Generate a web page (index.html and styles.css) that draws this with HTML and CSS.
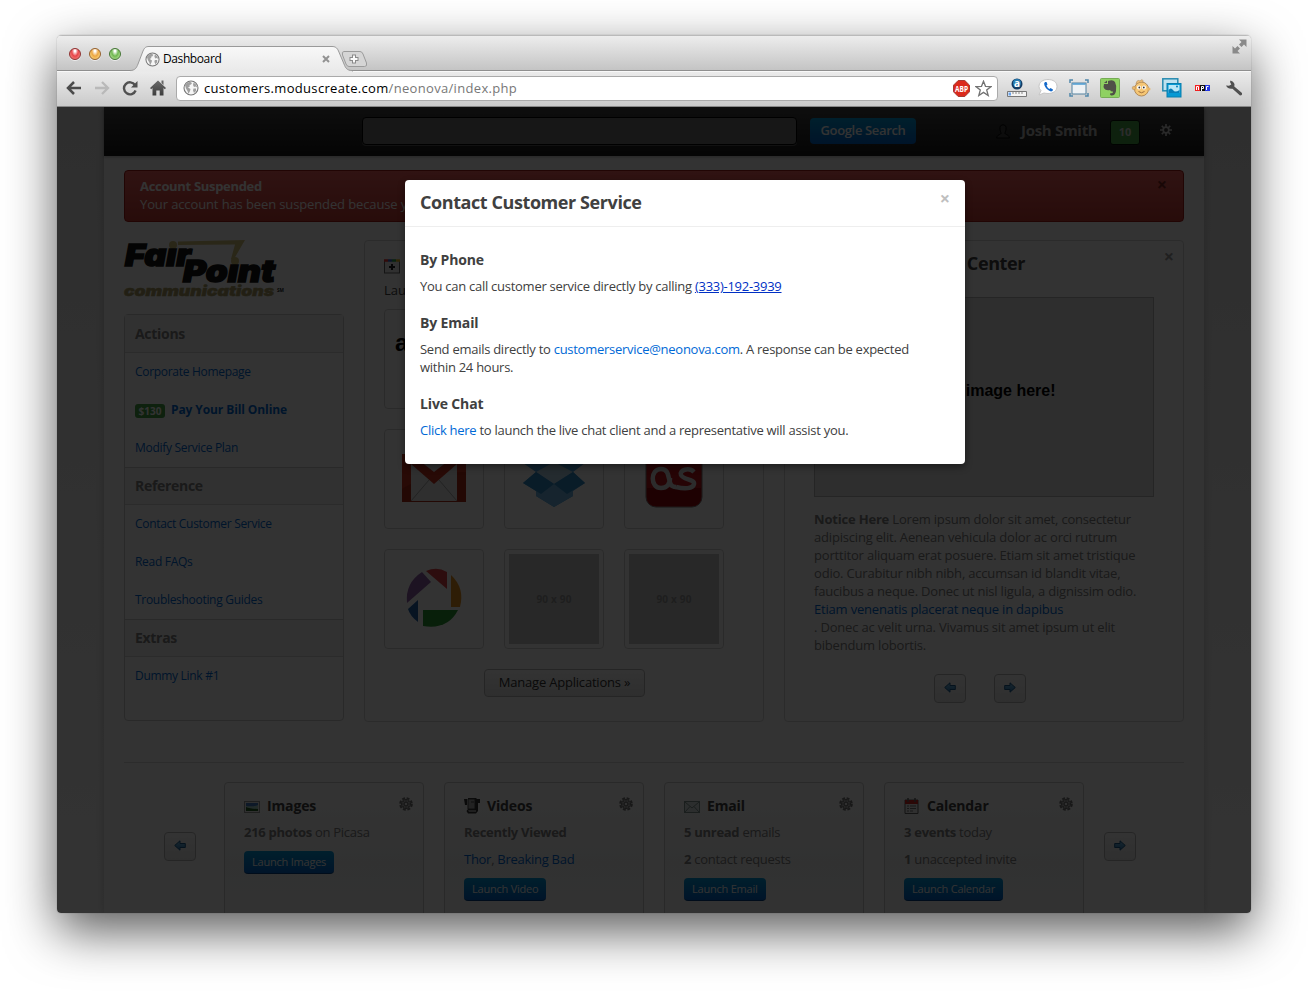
FILE: index.html
```
<!DOCTYPE html>
<html lang="en">
<head>
<meta charset="utf-8">
<title>Dashboard</title>
<link rel="stylesheet" href="styles.css">
</head>
<body>
<svg class="defs" width="0" height="0">
  <defs>
    <linearGradient id="arrowFill" x1="0" y1="0" x2="0" y2="1"><stop offset="0" stop-color="#7cc4ee"/><stop offset="1" stop-color="#2a7ab8"/></linearGradient>
    <linearGradient id="tabFill" x1="0" y1="0" x2="0" y2="1"><stop offset="0" stop-color="#f8f8f8"/><stop offset="1" stop-color="#e9e9e9"/></linearGradient>
    <linearGradient id="dark" x1="0" y1="0" x2="0" y2="1"><stop offset="0" stop-color="#6a6a6a"/><stop offset="1" stop-color="#3c3c3c"/></linearGradient>
  </defs>
  <symbol id="globe" viewBox="0 0 16 16"><circle cx="8" cy="8" r="7" fill="#f6f6f6" stroke="#777" stroke-width="1.1"/><path d="M2 5Q4 2 7 1.8L9 3 8 4.5 6.5 5 6.8 6.5 5 7.5 7.5 9 7 11 5.5 14 4.5 11 3 8.5zM10.5 2.5L13 4.5 14.3 7.5 12.5 6.5 11 7 10 5zM10.5 8.5L13 8.5 13 11 11 13 10 10.5z" fill="#a0a0a0"/></symbol>
  <symbol id="arrow" viewBox="0 0 12 11"><path d="M.7 5.5L6 .8V3.5H11.3V7.5H6V10.2Z" fill="url(#arrowFill)" stroke="#1c5c8e"/></symbol>
  <symbol id="gear" viewBox="0 0 14 14"><circle cx="7" cy="7" r="5.8" fill="none" stroke="#777" stroke-width="2" stroke-dasharray="2.9 1.65"/><circle cx="7" cy="7" r="4.6" fill="#bbb" stroke="#777"/><path d="M7 2.5V11.5M2.5 7H11.5M4 4L10 10M10 4L4 10" stroke="#777" stroke-width=".8"/><circle cx="7" cy="7" r="1.8" fill="#eee" stroke="#777"/></symbol>
</svg>

<main class="window">
  <header class="titlebar">
    <div class="lights"><i class="light red"></i><i class="light amber"></i><i class="light green"></i></div>
    <div class="tab">
      <svg class="tab-shape" width="230" height="26" viewBox="0 0 230 26"><path d="M0 24.5C5 24.5 6.500 22 8 18L13 5C14.500 1.500 16 .5 19 .5H202C205 .5 207 1.500 208.500 5L214 18C215.500 22 217 24.500 222 24.500V26H0Z" fill="url(#tabFill)" stroke="#999"/><path d="M0 25.500H222" stroke="#eaeaea"/></svg>
      <svg class="tab-icon" width="15" height="15"><use href="#globe"/></svg>
      <span class="tab-title">Dashboard</span>
      <svg class="tab-close" width="8" height="8" viewBox="0 0 8 8"><path d="M1 1L7 7M7 1L1 7" stroke="#929292" stroke-width="2"/></svg>
    </div>
    <svg class="new-tab" width="28" height="18" viewBox="0 0 28 18"><path d="M3 1.500H19Q21 1.500 22 4L25.500 13Q26.500 16.500 23.500 16.500H8Q6 16.500 5 14L1.500 5Q.5 1.500 3 1.500Z" fill="#d5d5d5" stroke="#9b9b9b"/><path d="M13 4.500V13.500M8.500 9H17.500" stroke="#8a8a8a" stroke-width="4"/><path d="M13 5.500V12.500M9.500 9H16.500" stroke="#fafafa" stroke-width="2"/></svg>
    <svg class="fullscreen" width="15" height="15" viewBox="0 0 15 15"><path d="M7 .5H14.500V8L12 5.500 9.500 8 7 5.500 9.500 3ZM.5 7L3 9.500 5.500 7 8 9.500 5.500 12 8 14.500H.5Z" fill="#8a8a8a"/></svg>
  </header>

  <nav class="toolbar">
    <svg width="16" height="16" viewBox="0 0 16 16"><path d="M8 2L2 8 8 14M2 8H15" fill="none" stroke="#4b4b4b" stroke-width="2.500"/></svg>
    <svg width="16" height="16" viewBox="0 0 16 16"><path d="M8 2L14 8 8 14M14 8H1" fill="none" stroke="#b9b9b9" stroke-width="2.300"/></svg>
    <svg width="16" height="16" viewBox="0 0 16 16"><path d="M13 5A6 6 0 1 0 13.600 10.500" fill="none" stroke="#505050" stroke-width="2.400"/><path d="M15.500 1V7.500H9Z" fill="#505050"/></svg>
    <svg width="16" height="16" viewBox="0 0 16 16"><path d="M8 .5L16 8 14.800 9.300 13.500 8.100V15.500H9.700V10.500H6.300V15.500H2.500V8.100L1.200 9.300 0 8 8 .5ZM11.500 .5H13.500V5L11.500 3Z" fill="url(#dark)"/></svg>
    <div class="omnibox">
      <svg width="16" height="16"><use href="#globe"/></svg>
      <span class="url">customers.moduscreate.com<span class="path">/neonova/index.php</span></span>
      <svg class="abp" width="17" height="17" viewBox="0 0 17 17"><path d="M5.200.5H11.800L16.500 5.200V11.800L11.800 16.500H5.200L.5 11.800V5.200Z" fill="#db2a1c" stroke="#a53a32"/><text x="8.500" y="11.500" textLength="13" lengthAdjust="spacingAndGlyphs" class="abp-text">ABP</text></svg>
      <svg width="17" height="17" viewBox="0 0 17 17"><path d="M8.500 1.200L10.500 6.300 16 6.600 11.700 10 13.200 15.500 8.500 12.400 3.800 15.500 5.300 10 1 6.600 6.500 6.300Z" fill="#fff" stroke="#737373" stroke-width="1.300"/></svg>
    </div>
    <svg width="20" height="20" viewBox="0 0 20 20"><circle cx="10" cy="6" r="5.500" fill="#123c64"/><circle cx="10" cy="5" r="4" fill="#277bb0"/><text x="10" y="9" class="ext-a">a</text><path d="M.5 13.500H19.500V18.500H.5Z" fill="#f4f4f4" stroke="#777"/><path d="M1.500 14.500H4V17.500H1.500Z" fill="#6aa5ef"/><path d="M6 14V16M9 14V16M12 14V16M15 14V16" stroke="#888"/></svg>
    <svg width="20" height="20" viewBox="0 0 20 20"><path d="M10 1.500C15 1.500 19 4 19 8.500S15 15.500 10 15.500Q8 15.500 6 15L1 17 3 12.500Q1 11 1 8.500C1 4 5 1.500 10 1.500Z" fill="#fff" stroke="#c6c6c6"/><path d="M7 4Q5.500 5 6.500 7.500 8.500 12 13 13.500 15 13.500 15 11.500L12.500 10 11.500 11Q9.500 10 8.500 7.500L9.500 6.500 8.500 4Z" fill="#1469ca"/></svg>
    <svg width="20" height="20" viewBox="0 0 20 20"><rect x="3" y="5" width="14" height="11" fill="#edf1f4" stroke="#53809e"/><path d="M3.500 6H16.500" stroke="#4a9bd2" stroke-width="1.500"/><path d="M1 5V2H4M16 2H19V5M19 15V18H16M4 18H1V15" fill="none" stroke="#4f87aa" stroke-width="1.500"/></svg>
    <svg width="20" height="20" viewBox="0 0 20 20"><rect x=".5" y=".5" width="19" height="19" rx="1" fill="#8fd162" stroke="#76ac55"/><path d="M8 3Q13 1 15 4 17 8 16 13 15 18 11 17.500 9 16 11 15 13 16 13 13.500 11 14 10 12 5 13 3.500 9L4 6H8Z" fill="#505048"/><path d="M4 5L7 2.500V5Z" fill="#505048"/></svg>
    <svg width="20" height="20" viewBox="0 0 20 20"><circle cx="10.500" cy="11" r="7" fill="#f5c674" stroke="#b18a58"/><circle cx="3" cy="10" r="1.800" fill="#e9b568" stroke="#b18a58" stroke-width=".5"/><circle cx="18" cy="11" r="1.500" fill="#e9b568"/><path d="M5 6Q6 1 9 3 12 0 12 4 8 4 5 6" fill="#efc078" stroke="#b18a58" stroke-width=".6"/><circle cx="8" cy="9.500" r="2" fill="#fff"/><circle cx="13" cy="9.500" r="2" fill="#fff"/><circle cx="8.300" cy="9.500" r=".9" fill="#333"/><circle cx="12.800" cy="9.500" r=".9" fill="#333"/><path d="M7.500 13.500Q10.500 16 13.500 13.500" fill="none" stroke="#9f6f3d"/></svg>
    <svg width="20" height="20" viewBox="0 0 20 20"><rect x=".8" y=".8" width="15" height="12" fill="#bfe2ef" stroke="#278ab0" stroke-width="1.500"/><rect x="5" y="5.500" width="14" height="13.500" fill="#0699d4" stroke="#087ead"/><path d="M6.500 7H17.500V15H6.500Z" fill="#b9e7f6"/><path d="M6.500 12Q9 9 11 12T17.500 12V15H6.500Z" fill="#087eb7"/><circle cx="15" cy="8.500" r="1" fill="#087eb7"/></svg>
    <svg width="20" height="20" viewBox="0 0 20 20"><path d="M2 7H7V13H2Z" fill="#e22"/><path d="M7 7H12V13H7Z" fill="#111"/><path d="M12 7H17V13H12Z" fill="#2438e4"/><path d="M3.500 12V8.500H5.500V12M8.500 13V8.500H10.500V10.500H8.500M13.500 12V8.500H15.500" fill="none" stroke="#fff"/></svg>
    <svg width="20" height="20" viewBox="0 0 20 20"><path d="M6.500 2.500Q9.500 3 10.500 6L10.300 8.500 18 15Q18.500 17.500 16 17.500L8.500 10.700Q4 11.500 2 7.500L5 7.800 7.300 6.500 6 4Z" fill="#505050"/></svg>
  </nav>

  <section class="viewport">
    <div class="page">
      <div class="topbar">
        <div class="search"></div>
        <div class="search-btn">Google Search</div>
        <div class="user">
          <svg width="14" height="15" viewBox="0 0 14 15"><path d="M7 .8C9.500.8 10.500 3 10 5.500 9.800 7.500 9 8 9 9.500 10 11 13 10.500 13.300 14H.7C1 10.500 4 11 5 9.500 5 8 4.200 7.500 4 5.500 3.500 3 4.500.8 7 .8Z" fill="#3c3c3c" stroke="#000"/></svg>
          <strong class="name">Josh Smith</strong><span class="count">10</span>
          <svg class="sun" width="12" height="12" viewBox="0 0 12 12"><circle cx="6" cy="6" r="2.800" fill="none" stroke="#ccc" stroke-width="1.700"/><path d="M6 0V3M6 9V12M0 6H3M9 6H12M1.800 1.800L4 4M8 8L10.200 10.200M10.200 1.800L8 4M4 8L1.800 10.200" stroke="#ccc" stroke-width="1.700"/></svg>
        </div>
      </div>
      <div class="content">
        <div class="alert"><div><b>Account Suspended</b><p>Your account has been suspended because your</p></div><span class="x">×</span></div>
        <div class="columns">
          <aside class="side">
            <svg class="logo" width="162" height="62" viewBox="0 0 162 62">
              <path d="M54 1.500L121 0 110 19H107L111 4.500 54 5Z" fill="#d3c17b"/><circle cx="49" cy="5" r="4" fill="#d3c17b"/><circle cx="111" cy="21" r="4" fill="#d3c17b"/>
              <text x="1" y="26" textLength="66" lengthAdjust="spacingAndGlyphs" class="logo-main">Fa&#305;r</text>
              <text x="59" y="42" textLength="92" lengthAdjust="spacingAndGlyphs" class="logo-main">Po&#305;nt</text>
              <text x="0" y="55.500" textLength="150" lengthAdjust="spacingAndGlyphs" class="logo-sub">communications</text>
              <text x="153" y="52" textLength="7" lengthAdjust="spacingAndGlyphs" class="logo-sm">SM</text>
            </svg>
            <div class="menu">
              <h3>Actions</h3><a>Corporate Homepage</a><a class="pay"><span class="due">$130</span><b>Pay Your Bill Online</b></a><a>Modify Service Plan</a>
              <h3>Reference</h3><a>Contact Customer Service</a><a>Read FAQs</a><a>Troubleshooting Guides</a>
              <h3>Extras</h3><a>Dummy Link #1</a>
            </div>
          </aside>
          <section class="panel apps">
            <svg width="16" height="15" viewBox="0 0 16 15"><rect x=".5" y="1.500" width="15" height="12.500" fill="#eee" stroke="#666"/><path d="M0 1.500H4" stroke="#e33" stroke-width="2.500"/><path d="M4 1.500H8" stroke="#3862c9" stroke-width="2.500"/><path d="M8 1.500H12" stroke="#2da44b" stroke-width="2.500"/><path d="M12 1.500H16" stroke="#e9b928" stroke-width="2.500"/><path d="M8 5V11M5 8H11" stroke="#222" stroke-width="2"/></svg>
            <p class="lead">Launch</p>
            <div class="tiles">
              <div class="tile amazon"><b>a</b></div><div class="tile"></div><div class="tile"></div>
              <div class="tile"><svg width="90" height="90" viewBox="0 0 90 90"><path d="M13 20H77V68H13Z" fill="#c7321e"/><path d="M13 55Q40 38 77 38V68H13Z" fill="#ad2818"/><path d="M22 24H68V67H22Z" fill="#e8e8e8"/><path d="M22 24H68V30L45 50 22 30Z" fill="#c7321e"/><path d="M22 20L45 38 68 20" fill="#eee"/><path d="M22 67L40 46M68 67L50 46" stroke="#aaa"/></svg></div>
              <div class="tile"><svg width="90" height="90" viewBox="0 0 90 90"><path d="M14 29L29 19 45 29 61 19 76 29 64 38 76 49 64 57V62L45 73 27 62V57L14 49 27 38Z" fill="#4aa3de"/><path d="M27 38L45 28 64 38 45 50Z" fill="#b5d5e8"/><path d="M27 56L45 50V73L27 62ZM64 56L45 50V73L64 62Z" fill="#6db6e4"/><path d="M45 50L32 60 14 49 27 38Z" fill="#318ac6"/><path d="M45 50L58 60 76 49 64 38Z" fill="#318ac6"/></svg></div>
              <div class="tile"><svg width="90" height="90" viewBox="0 0 90 90"><rect x="17" y="17" width="56" height="56" rx="10" fill="#bd171c" stroke="#777"/><path d="M18 54H72V63Q72 72 62 72H28Q18 72 18 63Z" fill="#95080d"/><path d="M47 53C36 53 44 35 32 35 21 35 21 54 32 54 38 54 41 50 41 44" fill="none" stroke="#ddd" stroke-width="4.500"/><path d="M65 38C60 33 50 36 52 41S66 45 65 50 55 55 47 53" fill="none" stroke="#ddd" stroke-width="4.500"/></svg></div>
              <div class="tile"><svg width="90" height="90" viewBox="0 0 90 90"><path d="M37 17Q48 12 58 18V35Z" fill="#e14347"/><path d="M62 21Q76 34 71 53H62Z" fill="#e79322"/><path d="M34 56H69Q59 76 34 72Z" fill="#2c9a35"/><path d="M19 55L29 46V68Q21 62 19 55Z" fill="#2465ac"/><path d="M18 49Q16 29 33 18L42 28Z" fill="#9361a9"/></svg></div>
              <div class="tile blank"><span>90 x 90</span></div><div class="tile blank"><span>90 x 90</span></div>
            </div>
            <div class="manage">Manage Applications »</div>
          </section>
          <section class="panel notice">
            <div class="notice-head"><h2>Message Center</h2><span class="x">×</span></div>
            <div class="picture">Put an image here!</div>
            <p><b>Notice Here</b> Lorem ipsum dolor sit amet, consectetur<br>adipiscing elit. Aenean vehicula dolor ac orci rutrum<br>porttitor aliquam erat posuere. Etiam sit amet tristique<br>odio. Curabitur nibh nibh, accumsan id blandit vitae,<br>faucibus a neque. Donec ut nisl ligula, a dignissim odio.<br><a>Etiam venenatis placerat neque in dapibus</a><br>. Donec ac velit urna. Vivamus sit amet ipsum ut elit<br>bibendum lobortis.</p>
            <div class="pager"><span class="arrow-btn"><svg width="12" height="11"><use href="#arrow"/></svg></span><span class="arrow-btn next"><svg width="12" height="11"><use href="#arrow"/></svg></span></div>
          </section>
        </div>
        <div class="cards">
          <span class="arrow-btn"><svg width="12" height="11"><use href="#arrow"/></svg></span>
          <article class="card"><div class="card-head"><svg width="16" height="16" viewBox="0 0 16 16"><rect x=".5" y="3.500" width="15" height="11" fill="#eee" stroke="#999"/><path d="M2 5H14V13H2Z" fill="#477fc5"/><path d="M2 8Q9 9 14 7V13H2Z" fill="#a8d5ce"/><path d="M2 9Q6 11 14 11V13H2Z" fill="#245f27"/></svg><h4>Images</h4><svg class="gear" width="14" height="14"><use href="#gear"/></svg></div><p><b>216 photos</b> on Picasa</p><span class="launch">Launch Images</span></article>
          <article class="card"><div class="card-head"><svg width="16" height="16" viewBox="0 0 16 16"><path d="M0 1H3V7H1ZM4 0H12L13 1H16V5H14V13L12 15.500H4L2.500 13 4 11Z" fill="#333"/><path d="M4 1H11V11H4Z" fill="#aaa" stroke="#444"/><path d="M7 3H10V5H7Z" fill="#777"/><path d="M4 12H12V14H5Z" fill="#999"/></svg><h4>Videos</h4><svg class="gear" width="14" height="14"><use href="#gear"/></svg></div><p><b>Recently Viewed</b></p><p><a>Thor</a>, <a>Breaking Bad</a></p><span class="launch">Launch Video</span></article>
          <article class="card"><div class="card-head"><svg width="16" height="16" viewBox="0 0 16 16"><rect x=".5" y="3.500" width="15" height="11" fill="#dce5e5" stroke="#819691"/><path d="M1 4L8 10 15 4M1 14L6 8.500M15 14L10 8.500" fill="none" stroke="#819691"/></svg><h4>Email</h4><svg class="gear" width="14" height="14"><use href="#gear"/></svg></div><p><b>5 unread</b> emails</p><p><b>2</b> contact requests</p><span class="launch">Launch Email</span></article>
          <article class="card"><div class="card-head"><svg width="16" height="16" viewBox="0 0 16 16"><path d="M1 2H14V15.500H1Z" fill="#eee" stroke="#666"/><path d="M1 2H14V6H1Z" fill="#d52a24"/><path d="M4 0V4M11 0V4" stroke="#666" stroke-width="1.500"/><path d="M3 8H5M6 8H12M3 10.500H5M6 10.500H12M3 13H5M6 13H9" stroke="#777"/></svg><h4>Calendar</h4><svg class="gear" width="14" height="14"><use href="#gear"/></svg></div><p><b>3 events</b> today</p><p><b>1</b> unaccepted invite</p><span class="launch">Launch Calendar</span></article>
          <span class="arrow-btn next"><svg width="12" height="11"><use href="#arrow"/></svg></span>
        </div>
      </div>
    </div>
    <div class="backdrop"></div>
    <div class="modal">
      <div class="modal-head"><h2>Contact Customer Service</h2><span class="x">×</span></div>
      <div class="modal-body">
        <h4>By Phone</h4><p>You can call customer service directly by calling <a class="phone">(333)-192-3939</a></p>
        <h4>By Email</h4><p>Send emails directly to <a>customerservice@neonova.com</a>. A response can be expected<br>within 24 hours.</p>
        <h4>Live Chat</h4><p><a>Click here</a> to launch the live chat client and a representative will assist you.</p>
      </div>
    </div>
  </section>
</main>
</body>
</html>
```
FILE: styles.css
```
* { box-sizing: border-box; }
body { margin: 0; padding: 35px 57px 79px; width: 1308px; height: 992px; overflow: hidden; background: #fff; font: 13px/18px "Open Sans", "Noto Sans", sans-serif; color: #808080; }
h2, h3, h4, p { margin: 0; }
p { white-space: nowrap; }
svg { display: block; flex: none; }
.defs { position: absolute; }
a { color: #0069d6; }
.window { width: 1194px; height: 878px; border-radius: 5px 5px 4px 4px; box-shadow: 0 18px 50px rgba(0,0,0,.65), 0 0 1px rgba(0,0,0,.5); display: flex; flex-direction: column; overflow: hidden; }

.titlebar { height: 36px; display: flex; align-items: flex-start; background: linear-gradient(#ededed, #c4c4c4); border-top: 1px solid #bababa; border-bottom: 1px solid #8f8f8f; flex: none; }
.lights { display: flex; gap: 8px; padding: 12px 0 0 12px; width: 73px; }
.light { width: 12px; height: 12px; border-radius: 50%; border: 1px solid; box-shadow: 0 1px 0 rgba(255,255,255,.6); }
.red { border-color: #8f3130; background: radial-gradient(ellipse at 50% 20%, #fff 0 8%, #e8464a 45%, #f58d85 90%); }
.amber { border-color: #95602c; background: radial-gradient(ellipse at 50% 20%, #fff 0 8%, #eda743 45%, #fde08a 90%); }
.green { border-color: #447534; background: radial-gradient(ellipse at 50% 20%, #fff 0 8%, #70b851 45%, #c1e8a1 90%); }
.tab { position: relative; width: 211px; height: 26px; margin-top: 10px; display: flex; align-items: center; padding-left: 15px; }
.tab-shape { position: absolute; left: 0; top: 0; }
.tab-icon, .tab-close, .tab-title { position: relative; }
.tab-title { margin: 0 0 0 3px; color: #000; font-size: 12px; width: 159px; letter-spacing: -.4px; }
.new-tab { margin: 14px 0 0; }
.fullscreen { margin: 3px 4px 0 auto; }

.toolbar { height: 36px; flex: none; display: flex; align-items: center; padding: 0 8px 2px 9px; gap: 12px; background: linear-gradient(#ebebeb, #cacaca); border-top: 1px solid #f8f8f8; border-bottom: 1px solid #888; }
.omnibox { width: 823px; height: 25px; margin: 0 -3px 0 -2px; padding: 0 5px 0 6px; display: flex; align-items: center; background: #fff; border: 1px solid #aaa; border-radius: 4px; }
.toolbar > svg:nth-child(n+6) { margin-right: -1px; }
.url { flex: 1; margin-left: 5px; color: #000; letter-spacing: .32px; }
.path { color: #777; }
.abp { margin-right: 5px; }
.abp-text { font: bold 8px "Open Sans", sans-serif; fill: #fff; text-anchor: middle; }
.ext-a { font: bold 10px/10px "Open Sans", sans-serif; fill: #fff; text-anchor: middle; }

.viewport { flex: 1; min-height: 0; position: relative; overflow: hidden; background: linear-gradient(#e6e6e6, #fff); padding: 0 47px; }
.page { width: 1100px; height: 806px; background: #fff; box-shadow: 0 0 8px rgba(0,0,0,.2); }
.topbar { height: 49px; display: flex; align-items: flex-start; background: linear-gradient(#464646, #191919); padding: 10px 32px 0 258px; box-shadow: 0 1px 3px rgba(0,0,0,.3); }
.search { width: 435px; height: 28px; background: #737373; border: 1px solid #000; border-radius: 4px; box-shadow: 0 1px 0 #555; }
.search-btn { margin: 1px 0 0 13px; width: 106px; height: 26px; border-radius: 4px; background: linear-gradient(#049cdb, #0064cd); color: #fff; text-align: center; line-height: 25px; font-weight: 600; letter-spacing: -.35px; }
.user { margin-left: auto; display: flex; align-items: center; height: 28px; }
.name { font-size: 15px; width: 77px; margin: 0 12px 2px 11px; white-space: nowrap; color: #bbb; letter-spacing: -.3px; }
.count { width: 30px; height: 25px; margin-top: 2px; background: #46a546; border: 1px solid #061006; border-radius: 3px; font-size: 11px; line-height: 22px; font-weight: 700; text-align: center; color: #ddd; }
.sun { margin: 0 0 3px 20px; }
.content { padding: 14px 20px 0; }
.alert { height: 52px; border: 1px solid #a41a14; border-radius: 4px; background: linear-gradient(#ee5f5b, #c43c35); color: #fff; padding: 6px 16px 0 15px; display: flex; justify-content: space-between; letter-spacing: -.12px; }
.alert b { letter-spacing: -.32px; }
.alert .x { color: #7c2521; }
.x { font: bold 18px/14px "Open Sans", sans-serif; color: #bfbfbf; }
.columns { display: flex; gap: 20px; margin-top: 18px; }
.side { width: 220px; }
.logo { margin-bottom: 12px; overflow: visible; }
.logo-main { font: italic 900 30px Inter, "Liberation Sans", sans-serif; stroke: #141414; stroke-width: 1.5; fill: #141414; }
.logo-sub { font: italic 900 14px Inter, "Liberation Sans", sans-serif; fill: #a99d63; stroke: #a99d63; stroke-width: .5; }
.logo-sm { font: bold 5px "Open Sans", sans-serif; fill: #222; }
.menu { height: 407px; border: 1px solid #ccc; border-radius: 4px; letter-spacing: -.3px; }
.menu h3 { height: 38px; background: #f5f5f5; border-top: 1px solid #ccc; border-bottom: 1px solid #d5d5d5; font-size: 14px; line-height: 35px; padding-left: 10px; }
.menu h3:first-child { border-top: 0; line-height: 38px; }
.menu a { display: flex; align-items: center; height: 38px; padding-left: 10px; font-size: 12px; }
.pay b { font-size: 12px; letter-spacing: -.1px; }
.due { background: #46a546; color: #fff; font: bold 10px/14px "Open Sans", sans-serif; height: 14px; width: 30px; border-radius: 3px; text-align: center; margin: 2px 6px 0 0; letter-spacing: 0; }
.panel { width: 400px; height: 481.500px; border: 1px solid #d8d8d8; border-radius: 4px; }
.apps { padding: 18px 19px 0; }
.lead { margin-top: 7px; height: 28px; color: #404040; }
.tiles { display: grid; grid-template-columns: repeat(3, 100px); gap: 20px; }
.tile { height: 100px; border: 1px solid #d3d3d3; border-radius: 4px; padding: 4px; }
.amazon b { display: block; padding: 15px 0 0 6px; font: bold 24px/28px "Liberation Sans", sans-serif; color: #000; }
.blank span { display: block; background: #c8c8c8; height: 90px; text-align: center; font: bold 10px/91px "Open Sans", sans-serif; color: #969696; letter-spacing: .2px; }
.manage { margin: 20px auto 0 100px; width: 161px; height: 28px; border: 1px solid #bbb; border-radius: 4px; background: linear-gradient(#fff, #e6e6e6); color: #333; text-align: center; line-height: 25px; letter-spacing: -.2px; }
.notice { padding: 8px 9px 0 29px; }
.notice-head { display: flex; justify-content: space-between; align-items: flex-start; height: 48px; }
.notice-head h2 { width: 211px; text-align: right; line-height: 28px; font-size: 18px; color: #404040; letter-spacing: -.4px; }
.notice-head .x { color: #a0a0a0; }
.picture { width: 340px; height: 200px; background: #e6e6e6; border: 1px solid #bbb; text-align: center; color: #000; font: bold 16px/186px "Liberation Sans", sans-serif; }
.notice p { margin-top: 13px; letter-spacing: -.19px; }
.pager { display: flex; justify-content: center; gap: 28px; margin: 20px 28px 0 0; }
.arrow-btn { width: 32px; height: 29px; flex: none; display: flex; justify-content: center; padding-top: 7px; border: 1px solid #bbb; border-radius: 4px; background: linear-gradient(#fff, #ebebeb); }
.next svg { transform: scaleX(-1); }
.cards { border-top: 1px solid #ddd; margin-top: 40px; padding: 19px 40px 0; display: flex; gap: 20px; }
.cards > .arrow-btn { margin-top: 50px; }
.card { width: 200px; height: 160px; border: 1px solid #ccc; border-radius: 4px; padding: 14px 10px 0 19px; background: linear-gradient(#fff, #f5f6f6 50%, #fafafa); letter-spacing: -.28px; }
.card:nth-child(2) { margin-left: 8px; }
.card-head { display: flex; align-items: center; height: 18px; }
.card h4 { font-size: 14px; color: #404040; margin-left: 7px; letter-spacing: -.15px; }
.gear { margin: 0 0 3px auto; }
.card p { margin: 8px 0 9px; }
.launch { display: inline-block; height: 23px; margin-top: 1px; line-height: 22px; padding: 0 8px; border-radius: 4px; background: linear-gradient(#049cdb, #0064cd); color: #fff; font-size: 11px; border: solid #003f81; border-width: 0 0 1px; white-space: nowrap; letter-spacing: -.22px; }

.backdrop { position: absolute; inset: 0; background: rgba(0,0,0,.8); }
.modal { position: absolute; left: 348px; top: 73px; width: 560px; height: 284px; border-radius: 4px; background: #fff; color: #404040; box-shadow: 0 3px 7px rgba(0,0,0,.4); }
.modal-head { height: 47px; border-bottom: 1px solid #eee; padding: 8px 15px 0; display: flex; justify-content: space-between; }
.modal-head h2 { font-size: 18px; line-height: 28px; letter-spacing: -.42px; }
.modal-head .x { margin-top: 3px; }
.modal-body { padding: 19px 15px; }
.modal-body h4 { font-size: 14px; line-height: 27px; letter-spacing: -.15px; }
.modal-body p { margin: 4px 0 14px; letter-spacing: -.27px; }
.phone { color: #0030c4; text-decoration: underline; }
```
